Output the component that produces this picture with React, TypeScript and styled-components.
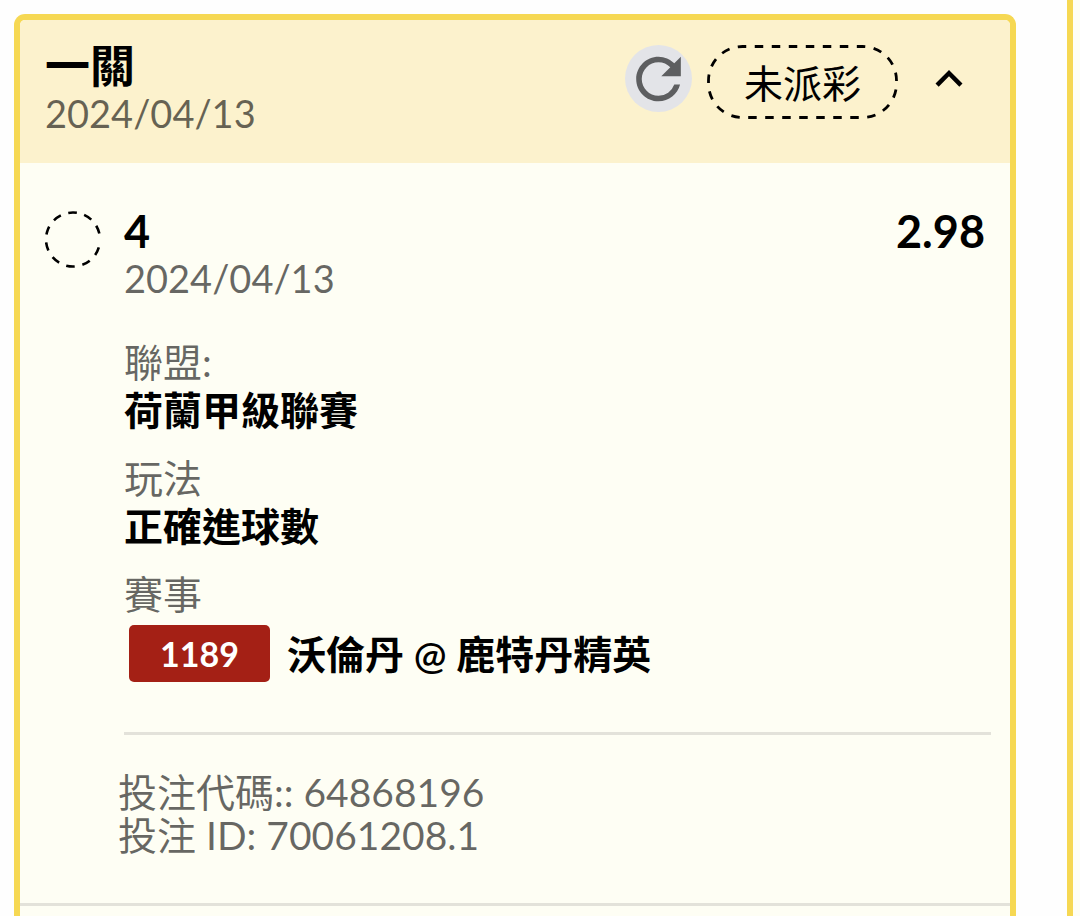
import React, { useState } from "react";
import styled, { createGlobalStyle } from "styled-components";
import { MdKeyboardArrowUp, MdRefresh } from "react-icons/md";

const color = {
  gold: "#f6d853",
  header: "#fcf2cd",
  paper: "#fefef4",
  muted: "rgba(0, 0, 0, 0.6)",
  rule: "#e3e2da",
  red: "#a42015",
};

const GlobalStyle = createGlobalStyle`
  * { box-sizing: border-box; }
  body {
    margin: 0;
    background: #fefefe;
    color: #000;
    font-family: Lato, "Noto Sans CJK TC", sans-serif;
    font-size: 39px;
    line-height: 48px;
  }
`;

const Page = styled.main`
  display: grid;
  grid-template-columns: minmax(0, 1fr) 13px;
  column-gap: 51px;
  min-height: 100vh;
  padding-left: 14px;
`;

const Card = styled.article`
  margin-top: 14px;
  border: 6px solid ${color.gold};
  border-bottom: 0;
  border-radius: 11px 11px 0 0;
  background: ${color.paper};
  overflow: hidden;
`;

const NextCard = styled.aside`
  border-left: 6px solid ${color.gold};
  background: ${color.paper};
`;

const CardHeader = styled.header`
  display: flex;
  justify-content: space-between;
  align-items: flex-start;
  padding: 22px 25px 27px;
  background: ${color.header};
`;

const Title = styled.h2`
  margin: 0;
  font-size: 45px;
  font-weight: 700;
  line-height: 48px;
`;

const DateText = styled.time`
  display: block;
  font-size: 38px;
  line-height: 46px;
  color: ${color.muted};
`;

const Actions = styled.div`
  display: flex;
  align-items: flex-start;
  gap: 15px;
  padding-top: 3px;
`;

const IconButton = styled.button<{ $filled?: boolean }>`
  display: flex;
  align-items: center;
  justify-content: center;
  width: ${(p) => (p.$filled ? 67 : 72)}px;
  height: 67px;
  padding: 0;
  border: 0;
  border-radius: 34px;
  background: ${(p) => (p.$filled ? "#e3e4e8" : "transparent")};
  color: ${(p) => (p.$filled ? "#5d5e60" : "#000")};
  cursor: pointer;
`;

const StatusPill = styled.span`
  position: relative;
  display: flex;
  align-items: center;
  justify-content: center;
  width: 191px;
  height: 74px;
  padding-top: 2px;
`;

const PillOutline = styled.svg`
  position: absolute;
  inset: 0;
`;

const Leg = styled.section`
  display: grid;
  grid-template-columns: 57px minmax(0, 1fr) auto;
  column-gap: 22px;
  align-items: start;
  padding: 44px 25px 50px;
`;

const LegState = styled.svg`
  margin-top: 4px;
`;

const Odds = styled.strong`
  font-size: 45px;
  font-weight: 700;
`;

const Details = styled.dl`
  display: grid;
  row-gap: 20px;
  margin: 37px 0 0;
`;

const Label = styled.dt`
  color: ${color.muted};
`;

const Value = styled.dd`
  margin: 0;
  font-weight: 600;
`;

const Match = styled(Value)`
  display: flex;
  align-items: center;
  gap: 17px;
  padding: 7px 0 0 5px;
  white-space: nowrap;
`;

const MatchCode = styled.span`
  width: 141px;
  border-radius: 5px;
  background: ${color.red};
  color: #fff;
  font-size: 34px;
  font-weight: 700;
  line-height: 57px;
  text-align: center;
`;

const Reference = styled.footer`
  padding-bottom: 46px;
  border-bottom: 3px solid ${color.rule};
  color: ${color.muted};
  line-height: 43px;
`;

const Rule = styled.hr`
  margin: 0 19px 36px 104px;
  border: 0;
  border-top: 3px solid ${color.rule};
`;

const ReferenceLine = styled.p`
  margin: 0;
  padding-left: 98px;
`;

/* Ten dashes round the ring, in degrees, with a wider break at the end. */
const ringDashes = [...Array(9).fill("18 16.7"), "18 29.7"].join(" ");

export default function App() {
  const [open, setOpen] = useState(true);

  return (
    <>
      <GlobalStyle />
      <Page>
        <Card>
          <CardHeader>
            <div>
              <Title>一關</Title>
              <DateText>2024/04/13</DateText>
            </div>
            <Actions>
              <IconButton $filled aria-label="重新整理">
                <MdRefresh size={68} />
              </IconButton>
              <StatusPill>
                <PillOutline width="191" height="74" fill="none" aria-hidden="true">
                  <rect
                    x="1.5"
                    y="1.5"
                    width="188"
                    height="71"
                    rx="34"
                    stroke="#000"
                    strokeWidth="2.8"
                    pathLength={270}
                    strokeDasharray="5 5"
                    strokeDashoffset="2.8"
                  />
                </PillOutline>
                未派彩
              </StatusPill>
              <IconButton
                aria-label="收合"
                aria-expanded={open}
                onClick={() => setOpen(!open)}
              >
                <MdKeyboardArrowUp size={54} />
              </IconButton>
            </Actions>
          </CardHeader>

          {open && (
            <>
              <Leg>
                <LegState width="57" height="57" fill="none" aria-hidden="true">
                  <circle
                    cx="28"
                    cy="28.5"
                    r="27"
                    stroke="#000"
                    strokeWidth="2.6"
                    pathLength={360}
                    strokeDasharray={ringDashes}
                    transform="rotate(17 28 28.5)"
                  />
                </LegState>
                <div>
                  <Title as="h3">4</Title>
                  <DateText>2024/04/13</DateText>
                  <Details>
                    <div>
                      <Label>聯盟:</Label>
                      <Value>荷蘭甲級聯賽</Value>
                    </div>
                    <div>
                      <Label>玩法</Label>
                      <Value>正確進球數</Value>
                    </div>
                    <div>
                      <Label>賽事</Label>
                      <Match>
                        <MatchCode>1189</MatchCode>
                        <span>沃倫丹 @ 鹿特丹精英</span>
                      </Match>
                    </div>
                  </Details>
                </div>
                <Odds>2.98</Odds>
              </Leg>
              <Reference>
                <Rule />
                <ReferenceLine>投注代碼:: 64868196</ReferenceLine>
                <ReferenceLine>投注 ID: 70061208.1</ReferenceLine>
              </Reference>
            </>
          )}
        </Card>
        <NextCard />
      </Page>
    </>
  );
}
